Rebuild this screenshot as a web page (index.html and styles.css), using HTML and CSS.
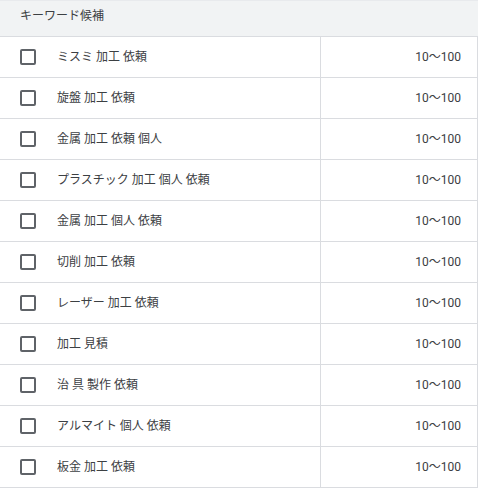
FILE: index.html
```html
<!DOCTYPE html>
<html lang="ja">
<head>
    <meta charset="UTF-8">
    <meta name="viewport" content="width=device-width, initial-scale=1.0">
    <link rel="stylesheet" href="styles.css">
    <title>キーワード候補</title>
</head>
<body>
    <div class="keywords">
        <div class="keywords-header">キーワード候補</div>

        <div class="row">
            <div class="cell-name"><span class="check"></span>ミスミ 加工 依頼</div>
            <div class="cell-volume">10～100</div>
        </div>
        <div class="row">
            <div class="cell-name"><span class="check"></span>旋盤 加工 依頼</div>
            <div class="cell-volume">10～100</div>
        </div>
        <div class="row">
            <div class="cell-name"><span class="check"></span>金属 加工 依頼 個人</div>
            <div class="cell-volume">10～100</div>
        </div>
        <div class="row">
            <div class="cell-name"><span class="check"></span>プラスチック 加工 個人 依頼</div>
            <div class="cell-volume">10～100</div>
        </div>
        <div class="row">
            <div class="cell-name"><span class="check"></span>金属 加工 個人 依頼</div>
            <div class="cell-volume">10～100</div>
        </div>
        <div class="row">
            <div class="cell-name"><span class="check"></span>切削 加工 依頼</div>
            <div class="cell-volume">10～100</div>
        </div>
        <div class="row">
            <div class="cell-name"><span class="check"></span>レーザー 加工 依頼</div>
            <div class="cell-volume">10～100</div>
        </div>
        <div class="row">
            <div class="cell-name"><span class="check"></span>加工 見積</div>
            <div class="cell-volume">10～100</div>
        </div>
        <div class="row">
            <div class="cell-name"><span class="check"></span>治 具 製作 依頼</div>
            <div class="cell-volume">10～100</div>
        </div>
        <div class="row">
            <div class="cell-name"><span class="check"></span>アルマイト 個人 依頼</div>
            <div class="cell-volume">10～100</div>
        </div>
        <div class="row">
            <div class="cell-name"><span class="check"></span>板金 加工 依頼</div>
            <div class="cell-volume">10～100</div>
        </div>
    </div>
</body>
</html>
```

FILE: styles.css
```css
body {
    font-family: Roboto, "Noto Sans CJK JP", sans-serif;
    margin: 0;
    padding: 0;
    background-color: #fff;
    color: #3c4043;
}

.keywords {
    width: 478px;
}

.keywords-header {
    background-color: #f1f3f4;
    border-top: 1px solid #e8eaed;
    border-bottom: 1px solid #dadce0;
    height: 35px;
    line-height: 31px;
    padding-left: 20px;
    font-size: 12px;
    color: #3c4043;
}

.row {
    display: flex;
    height: 40px;
    border-bottom: 1px solid #dadce0;
    border-right: 1px solid #dadce0;
    font-size: 12px;
    line-height: 16px;
}

.cell-name {
    width: 321px;
    border-right: 1px solid #dadce0;
    display: flex;
    align-items: center;
    padding-left: 20px;
    box-sizing: border-box;
}

.check {
    width: 12px;
    height: 12px;
    border: 2px solid #5f6368;
    border-radius: 2px;
    margin-right: 21px;
}

.cell-volume {
    flex: 1;
    display: flex;
    align-items: center;
    justify-content: flex-end;
    padding-right: 16px;
}
```
